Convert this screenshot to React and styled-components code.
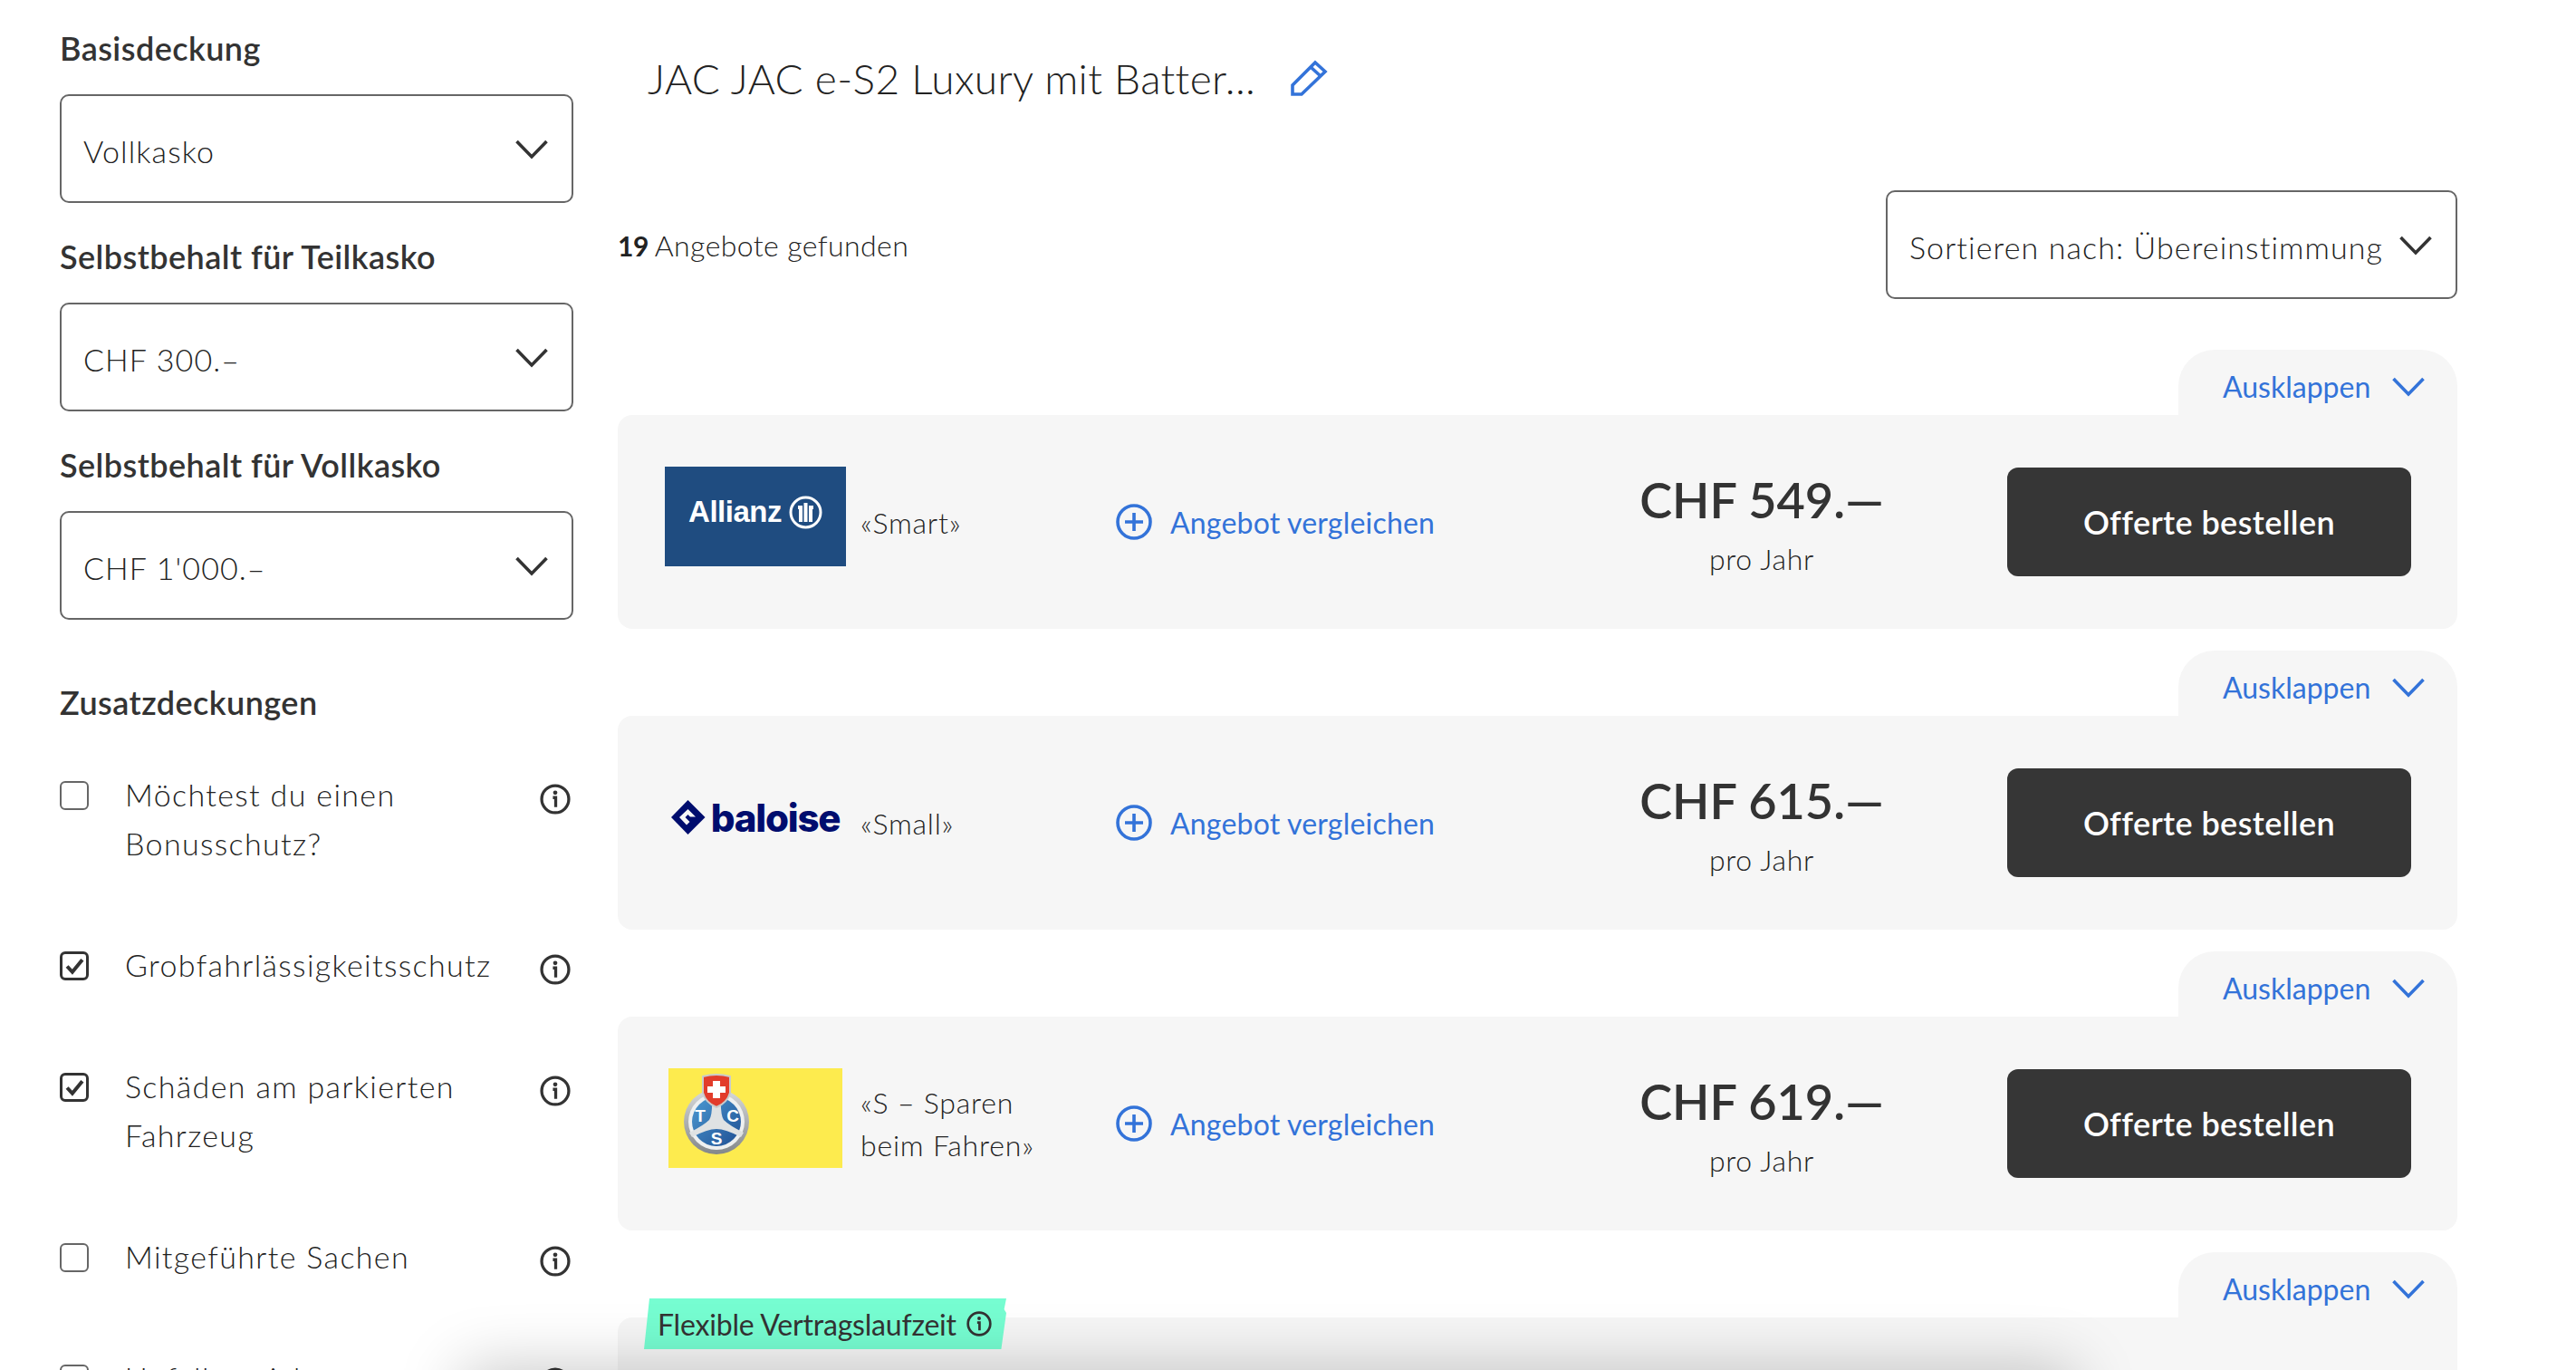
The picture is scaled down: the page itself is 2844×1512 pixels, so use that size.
import React from "react";
import styled, { createGlobalStyle } from "styled-components";

const GlobalStyle = createGlobalStyle`
  html, body {
    margin: 0;
    padding: 0;
    background: #fff;
    color: #333;
    font-family: "Lato", "Open Sans", sans-serif;
    font-weight: 400;
  }
  * { box-sizing: border-box; }
`;

const BLUE = "#3373d9";
const INK = "#222";

const Page = styled.div`
  position: relative;
  display: flex;
  height: 1512px;
  overflow: hidden;
`;

const Sidebar = styled.aside`
  width: 567px;
  margin-left: 66px;
  padding-top: 28px;
  flex-shrink: 0;
`;

const Heading = styled.h3`
  margin: ${(p) => p.$top || 0}px 0 ${(p) => p.$bottom || 26}px;
  font-size: 36px;
  line-height: 50px;
  font-weight: 600;
  letter-spacing: 0.45px;
  color: #333;
`;

const SelectBox = styled.div`
  display: flex;
  align-items: center;
  justify-content: space-between;
  height: 120px;
  width: ${(p) => p.$width || "100%"};
  margin-bottom: ${(p) => p.$bottom || 0}px;
  padding: 4px 26px 0 24px;
  border: 2px solid #666;
  border-radius: 10px;
  background: #fff;
  color: ${INK};
  font-size: 34px;
  font-weight: 300;
  letter-spacing: 1.1px;
`;

const Chevron = styled.svg`
  width: 36px;
  height: 22px;
  flex-shrink: 0;
  fill: none;
  stroke: ${(p) => p.$color || "#333"};
  stroke-width: 3.6;
  margin-top: ${(p) => p.$nudge || -2}px;
`;

const Check = styled.div`
  display: grid;
  grid-template-columns: 32px 1fr 34px;
  column-gap: 40px;
  padding-right: 3px;
  margin-bottom: 80px;
  color: ${INK};
  font-size: 34px;
  font-weight: 300;
  line-height: 54px;
  letter-spacing: 1.35px;
`;

const CheckText = styled.span`
  margin-top: -2px;
  margin-bottom: 2px;
`;

const Box = styled.span`
  display: flex;
  align-items: center;
  justify-content: center;
  width: 32px;
  height: 32px;
  margin-top: 10px;
  border: ${(p) => (p.$on ? "3px solid #333" : "2px solid #666")};
  border-radius: 6px;
`;

const InfoSlot = styled.span`
  margin-top: 13px;
  display: flex;
`;

const Main = styled.main`
  width: 2031px;
  margin-left: 49px;
  padding-top: 56px;
  flex-shrink: 0;
`;

const TitleRow = styled.div`
  display: flex;
  align-items: center;
  height: 60px;
  padding-left: 33px;
  gap: 39px;
  margin-bottom: 94px;
`;

const Title = styled.h1`
  margin: 0;
  color: ${INK};
  font-size: 46px;
  font-weight: 300;
  letter-spacing: 0.35px;
`;

const ResultRow = styled.div`
  display: flex;
  align-items: center;
  justify-content: space-between;
  height: 120px;
  margin-bottom: 56px;
`;

const Count = styled.div`
  color: ${INK};
  font-size: 32px;
  font-weight: 300;
  letter-spacing: 0.4px;
  b { font-size: 30px; font-weight: 700; letter-spacing: -0.5px; margin-right: -1px; }
`;

const Offer = styled.section`
  position: relative;
  display: flex;
  flex-direction: column;
  margin-bottom: 24px;
`;

const Tab = styled.div`
  align-self: flex-end;
  display: flex;
  align-items: center;
  gap: 24px;
  width: 308px;
  height: 72px;
  padding: 8px 0 0 49px;
  border-radius: 40px 40px 0 0;
  background: #f6f6f6;
  color: ${BLUE};
  font-size: 32px;
`;

const OfferBody = styled.div`
  display: flex;
  align-items: center;
  height: 236px;
  padding-left: 52px;
  background: #f6f6f6;
  border-radius: 16px 0 16px 16px;
`;

const LogoSlot = styled.div`
  display: flex;
  justify-content: center;
  width: 200px;
  height: 110px;
  margin: -12px 16px 0 0;
`;

const AllianzLogo = styled.div`
  display: flex;
  align-items: center;
  justify-content: center;
  gap: 8px;
  width: 200px;
  padding-bottom: 10px;
  background: #1f4c80;
  color: #fff;
  font: 700 33px "Liberation Sans", sans-serif;
  letter-spacing: -0.5px;
`;

const BaloiseLogo = styled.div`
  display: flex;
  align-items: center;
  gap: 6px;
  color: #000d6e;
  font: 800 42px "Inter", sans-serif;
  letter-spacing: -1.2px;
`;

const TcsLogo = styled.div`
  display: flex;
  align-items: center;
  width: 192px;
  padding: 0 0 8px 15px;
  background: #fdeb4e;
`;

const PlanName = styled.div`
  width: 282px;
  padding-right: 50px;
  font-size: 32px;
  font-weight: 300;
  color: ${INK};
  line-height: 47px;
  letter-spacing: 0.8px;
`;

const Compare = styled.div`
  display: flex;
  align-items: center;
  gap: 20px;
  width: 460px;
  color: ${BLUE};
  font-size: 32px;
  letter-spacing: 0.2px;
`;

const Price = styled.div`
  width: 506px;
  margin: 6px 18px 0 0;
  text-align: center;
`;

const Amount = styled.div`
  font-size: 54px;
  line-height: 68px;
  font-weight: 600;
`;

const Period = styled.div`
  margin-top: 7px;
  font-size: 32px;
  font-weight: 300;
  color: ${INK};
  line-height: 48px;
  letter-spacing: 0.7px;
`;

const OrderButton = styled.button`
  width: 446px;
  height: 120px;
  border: 0;
  border-radius: 12px;
  background: #363636;
  color: #fff;
  font: 600 36px "Lato", sans-serif;
  letter-spacing: 0.4px;
`;

const Badge = styled.div`
  position: absolute;
  left: 29px;
  top: 51px;
  z-index: 2;
  display: flex;
  align-items: center;
  gap: 11px;
  width: 400px;
  height: 56px;
  padding-left: 15px;
  background: #76fdd1;
  clip-path: polygon(6px 0, 100% 0, 99.4% 12px, 100% 16px, 98.6% 100%, 0 100%);
  font-size: 32px;
  letter-spacing: -0.2px;
`;

const BottomShadow = styled.div`
  position: absolute;
  left: 530px;
  top: 1530px;
  width: 1740px;
  height: 60px;
  z-index: 3;
  box-shadow: 0 0 70px 20px rgba(0, 0, 0, 0.22);
`;

const ChevronIcon = ({ color, nudge }) => (
  <Chevron $color={color} $nudge={nudge} viewBox="0 0 36 22">
    <path d="M1.5 2 L18 19 L34.5 2" />
  </Chevron>
);

const InfoIcon = ({ size = 34 }) => (
  <svg width={size} height={size} viewBox="0 0 33 33" fill="none" stroke="#333">
    <circle cx="16.5" cy="16.5" r="14.5" strokeWidth="3.2" />
    <path d="M14 14.8 H17 V25" strokeWidth="3.2" />
    <circle cx="16.5" cy="9.5" r="2.3" fill="#333" stroke="none" />
  </svg>
);

const CheckMark = () => (
  <svg width="21" height="19" viewBox="0 0 20 18" fill="none" stroke="#333" strokeWidth="3.8">
    <path d="M2 9 L7.5 15 L18 2" />
  </svg>
);

const PlusIcon = () => (
  <svg width="40" height="40" viewBox="0 0 40 40" fill="none" stroke={BLUE} strokeWidth="3.6">
    <circle cx="20" cy="20" r="18" />
    <path d="M20 10 V30 M10 20 H30" />
  </svg>
);

const Pencil = () => (
  <svg width="41" height="40" viewBox="0 0 41 40" fill="none" stroke={BLUE} strokeWidth="3.6">
    <path d="M2 38 V28 L27 3 L38 13 L12 38 Z" />
    <path d="M22 8 L33 18" />
  </svg>
);

const AllianzEmblem = () => (
  <svg width="37" height="37" viewBox="0 0 37 37" fill="none" stroke="#fff">
    <circle cx="18.5" cy="18.5" r="16.5" strokeWidth="3" />
    <path d="M10 13 H13 V29 M18.5 8 V29 M27 13 H24 V29" strokeWidth="4" />
  </svg>
);

const BaloiseMark = () => (
  <svg width="38" height="38" viewBox="0 0 38 38">
    <path fill="#000d6e" d="M18.5 0 L37.5 19 L18.5 38 L0 19 Z" />
    <path fill="#f6f6f6" d="M18.5 10 L27 18.5 H21 L18.5 16 L15.5 19 L20.5 24 L17 27.5 L9 19 Z" />
  </svg>
);

const TcsEmblem = () => (
  <svg width="76" height="92" viewBox="0 0 76 92">
    <defs>
      <linearGradient id="tcsRing" x1="0" y1="0" x2="0" y2="1">
        <stop offset="0" stopColor="#d8dadb" />
        <stop offset="1" stopColor="#83878a" />
      </linearGradient>
      <linearGradient id="tcsBlue" x1="0" y1="0" x2="1" y2="1">
        <stop offset="0" stopColor="#4c9ad2" />
        <stop offset="1" stopColor="#1f4f93" />
      </linearGradient>
    </defs>
    <circle cx="38" cy="54" r="36" fill="url(#tcsRing)" />
    <circle cx="38" cy="54" r="31" fill="#eef0f0" />
    <circle cx="38" cy="54" r="27" fill="url(#tcsBlue)" />
    <path fill="#dfe2e3" d="M33 24 H43 Q42 46 46 52 Q52 58 68 66 L65 71 Q48 62 38 62 Q28 62 11 71 L8 66 Q24 58 30 52 Q34 46 33 24 Z" />
    <text x="20" y="54" fontFamily="Liberation Sans" fontWeight="700" fontSize="19" fill="#fff" textAnchor="middle">T</text>
    <text x="56" y="54" fontFamily="Liberation Sans" fontWeight="700" fontSize="19" fill="#fff" textAnchor="middle">C</text>
    <text x="38" y="79" fontFamily="Liberation Sans" fontWeight="700" fontSize="19" fill="#fff" textAnchor="middle">S</text>
    <path fill="#e23c2b" stroke="#c9cbcb" strokeWidth="2" d="M23 4 Q38 0 53 4 V22 Q50 33 38 38 Q26 33 23 22 Z" />
    <path fill="#fff" d="M34 9 H42 V15 H48 V22 H42 V28 H34 V22 H28 V15 H34 Z" />
  </svg>
);

const coverages = [
  { label: "Möchtest du einen Bonusschutz?", on: false },
  { label: "Grobfahrlässigkeitsschutz", on: true },
  { label: "Schäden am parkierten Fahrzeug", on: true },
  { label: "Mitgeführte Sachen", on: false },
  { label: "Unfallversicherung", on: false },
];

const offers = [
  {
    id: "allianz",
    plan: "«Smart»",
    price: "CHF 549.—",
    logo: (
      <AllianzLogo>
        Allianz
        <AllianzEmblem />
      </AllianzLogo>
    ),
  },
  {
    id: "baloise",
    plan: "«Small»",
    price: "CHF 615.—",
    logo: (
      <BaloiseLogo>
        <BaloiseMark />
        baloise
      </BaloiseLogo>
    ),
  },
  {
    id: "tcs",
    plan: "«S – Sparen beim Fahren»",
    price: "CHF 619.—",
    logo: (
      <TcsLogo>
        <TcsEmblem />
      </TcsLogo>
    ),
  },
  { id: "next", plan: "", price: "", logo: null, badge: true },
];

const App = () => {
  return (
    <Page>
      <GlobalStyle />
      <Sidebar>
        <Heading>Basisdeckung</Heading>
        <SelectBox $bottom={34}>
          Vollkasko
          <ChevronIcon />
        </SelectBox>
        <Heading>Selbstbehalt für Teilkasko</Heading>
        <SelectBox $bottom={34}>
          CHF 300.–
          <ChevronIcon />
        </SelectBox>
        <Heading>Selbstbehalt für Vollkasko</Heading>
        <SelectBox>
          CHF 1'000.–
          <ChevronIcon />
        </SelectBox>
        <Heading $top={66} $bottom={52}>
          Zusatzdeckungen
        </Heading>
        {coverages.map((item) => (
          <Check key={item.label}>
            <Box $on={item.on}>{item.on && <CheckMark />}</Box>
            <CheckText>{item.label}</CheckText>
            <InfoSlot>
              <InfoIcon />
            </InfoSlot>
          </Check>
        ))}
      </Sidebar>
      <Main>
        <TitleRow>
          <Title>JAC JAC e-S2 Luxury mit Batter...</Title>
          <Pencil />
        </TitleRow>
        <ResultRow>
          <Count>
            <b>19</b> Angebote gefunden
          </Count>
          <SelectBox $width="631px">
            Sortieren nach: Übereinstimmung
            <ChevronIcon />
          </SelectBox>
        </ResultRow>
        {offers.map((offer) => (
          <Offer key={offer.id}>
            <Tab>
              Ausklappen
              <ChevronIcon color={BLUE} nudge={1} />
            </Tab>
            <OfferBody>
              {offer.logo && (
                <>
                  <LogoSlot>{offer.logo}</LogoSlot>
                  <PlanName>{offer.plan}</PlanName>
                  <Compare>
                    <PlusIcon />
                    Angebot vergleichen
                  </Compare>
                  <Price>
                    <Amount>{offer.price}</Amount>
                    <Period>pro Jahr</Period>
                  </Price>
                  <OrderButton>Offerte bestellen</OrderButton>
                </>
              )}
            </OfferBody>
            {offer.badge && (
              <Badge>
                Flexible Vertragslaufzeit
                <InfoIcon size={28} />
              </Badge>
            )}
          </Offer>
        ))}
      </Main>
      <BottomShadow />
    </Page>
  );
};

export default App;
